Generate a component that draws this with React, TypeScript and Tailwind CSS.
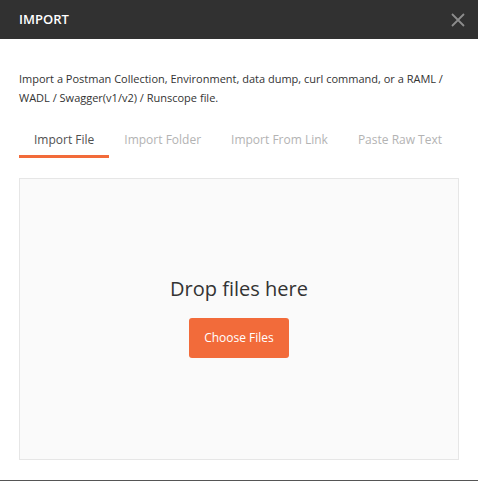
import React from "react";

export default function App() {
  const tabs = ["Import File", "Import Folder", "Import From Link", "Paste Raw Text"];
  return (
    <div
      className="w-[478px] h-[481px] bg-[#555] overflow-hidden"
      style={{ fontFamily: '"Open Sans", "Noto Sans", sans-serif' }}
    >
      <div className="w-[478px] h-[480px] bg-white flex flex-col">
        <div className="h-[39px] bg-[#313131] flex items-center justify-between pl-[19px] pr-[12px] shrink-0">
          <span className="text-white text-[13px] font-semibold leading-none">IMPORT</span>
          <svg width="14" height="14" viewBox="0 0 14 14" className="mr-[1px]">
            <path d="M1 1L13 13M13 1L1 13" stroke="#8c8c8c" strokeWidth="1.8" />
          </svg>
        </div>
        <div className="px-[19px] pt-[30px]">
          <p className="text-[11px] leading-[19px] text-[#333]">
            Import a Postman Collection, Environment, data dump, curl command, or a RAML / WADL / Swagger(v1/v2) / Runscope file.
          </p>
          <div className="flex mt-[24px]">
            {tabs.map((t, i) => (
              <div
                key={t}
                className={
                  i === 0
                    ? "px-[15px] pb-[6px] border-b-[3px] border-[#f26b3a] text-[12px] leading-[18px] text-[#505050]"
                    : "px-[15px] pb-[6px] border-b-[3px] border-transparent text-[12px] leading-[18px] text-[#b3b3b3]"
                }
              >
                {t}
              </div>
            ))}
          </div>
          <div className="mt-[20px] w-[440px] h-[282px] border border-[#e6e6e6] bg-[#fafafa] flex flex-col items-center pt-[96px]">
            <div className="text-[20px] leading-[28px] text-[#333]">Drop files here</div>
            <button className="mt-[15px] w-[100px] h-[40px] rounded-[3px] bg-[#f26b3a] text-white text-[12px] font-medium">
              Choose Files
            </button>
          </div>
        </div>
      </div>
    </div>
  );
}
